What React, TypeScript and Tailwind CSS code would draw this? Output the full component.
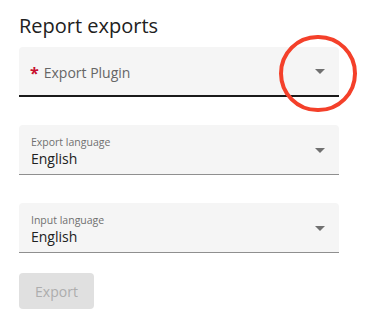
import { ReactNode } from 'react';

const font = { fontFamily: '"Open Sans", "Noto Sans", sans-serif' };

const Arrow = () => (
  <svg viewBox="0 0 24 24" className="absolute right-[7px] top-1/2 -translate-y-1/2 w-6 h-6" fill="rgba(0,0,0,0.54)">
    <path d="M7 10l5 5 5-5z" />
  </svg>
);

const SelectField = ({ label, value }: { label: string; value: string }) => (
  <div className="relative w-[320px] h-[50px] bg-[#f5f5f5] rounded-t-[4px] border-b border-[#8f8f8f] px-3 pt-[10px]">
    <div className="text-[10.5px] leading-[14px] text-[#707070]">{label}</div>
    <div className="text-[14px] leading-[20px] text-[#212121]">{value}</div>
    <Arrow />
  </div>
);

const Section = ({ children }: { children: ReactNode }) => <div className="mt-[28px]">{children}</div>;

export default function App() {
  return (
    <div className="w-[373px] h-[321px] bg-white pl-[19px] pt-[12px]" style={font}>
      <h2 className="text-[20px] leading-[28px] text-[#212121]">Report exports</h2>

      <div className="relative mt-[7px]">
        <div className="relative w-[320px] h-[50px] bg-[#f5f5f5] rounded-t-[4px] border-b-2 border-[#1a1a1a] px-[11px] flex items-center pt-[3px]">
          <span className="text-[#c8102e] font-bold text-[16px] leading-[20px] mr-[5px]">*</span>
          <span className="text-[14px] leading-[20px] text-[#666666]">Export Plugin</span>
          <Arrow />
        </div>
        <div className="absolute left-[260px] top-[-12px] w-[78px] h-[77px] rounded-full border-[4px] border-[#f4402a]" />
      </div>

      <Section>
        <SelectField label="Export language" value="English" />
      </Section>
      <Section>
        <SelectField label="Input language" value="English" />
      </Section>

      <button
        disabled
        className="mt-[20px] w-[75px] h-[36px] rounded-[4px] bg-[#e0e0e0] text-[14px] text-[#adadad]"
      >
        Export
      </button>
    </div>
  );
}
